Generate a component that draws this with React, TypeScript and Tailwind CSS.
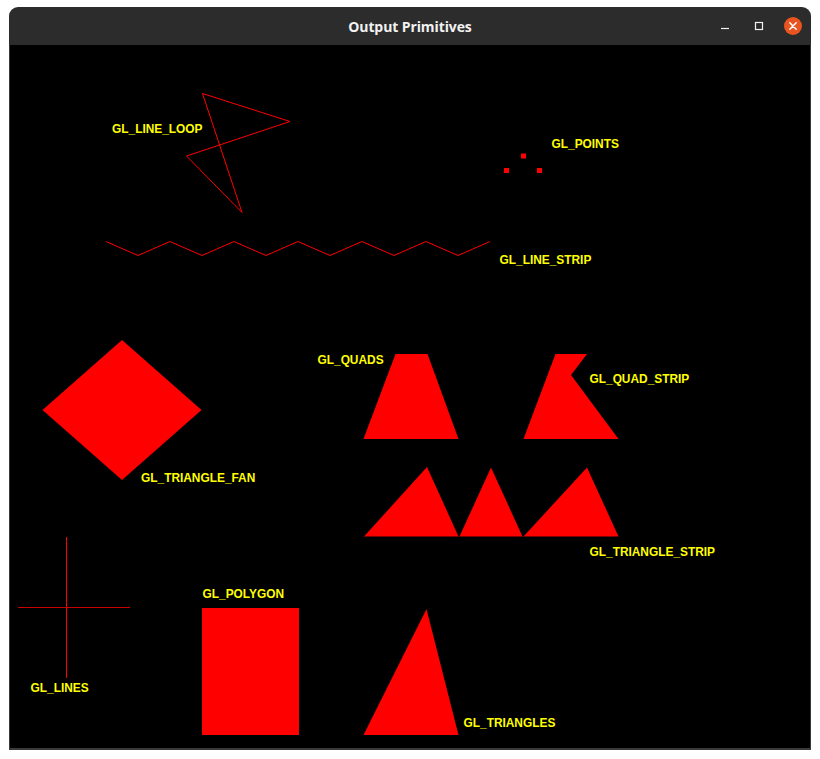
const RED = "#ff0000"
const YELLOW = "#ffff00"

type Label = { text: string; x: number; y: number }

// page coordinates, the svg viewBox lines up with the window position
const labels: Label[] = [
    { text: "GL_LINE_LOOP", x: 112, y: 133 },
    { text: "GL_POINTS", x: 551.5, y: 148 },
    { text: "GL_LINE_STRIP", x: 499.5, y: 264 },
    { text: "GL_QUADS", x: 317.5, y: 364 },
    { text: "GL_QUAD_STRIP", x: 589.5, y: 383 },
    { text: "GL_TRIANGLE_FAN", x: 141, y: 482 },
    { text: "GL_TRIANGLE_STRIP", x: 589.5, y: 556 },
    { text: "GL_POLYGON", x: 202.5, y: 598 },
    { text: "GL_LINES", x: 30.5, y: 692 },
    { text: "GL_TRIANGLES", x: 463.5, y: 727 },
]

const lineStrip = Array.from({ length: 13 }, (_, i) => `${106 + i * 32},${i % 2 === 0 ? 241.5 : 255.5}`).join(" ")

const Drawing = () => (
    <svg className="block" width={800} height={703} viewBox="10 45 800 703">
        {/* line loop */}
        <polygon points="202.5,93.5 290,121.5 186.5,156 242,212.5" fill="none" stroke={RED} strokeWidth={1} />

        {/* points */}
        <rect x={504} y={168} width={5} height={5} fill={RED} />
        <rect x={521} y={153.5} width={5} height={5} fill={RED} />
        <rect x={537} y={168} width={5} height={5} fill={RED} />

        {/* line strip */}
        <polyline points={lineStrip} fill="none" stroke={RED} strokeWidth={1} />

        {/* triangle fan */}
        <polygon points="122,340 201.5,410 122,480 42.5,410" fill={RED} />

        {/* quads */}
        <polygon points="395.5,354 427.5,354 458.5,439 363.5,439" fill={RED} />

        {/* quad strip */}
        <polygon points="555.5,354 587,354 571,375 618.5,439 523.5,439" fill={RED} />

        {/* triangle strip */}
        <polygon points="364,536.5 427,467 458.5,536.5" fill={RED} />
        <polygon points="459.5,536.5 491,467.5 522.5,536.5" fill={RED} />
        <polygon points="523.5,536.5 587,467.5 618.5,536.5" fill={RED} />

        {/* lines */}
        <line x1={66.5} y1={537} x2={66.5} y2={678} stroke={RED} strokeWidth={1} />
        <line x1={18} y1={607.5} x2={130} y2={607.5} stroke="#c80000" strokeWidth={1} />

        {/* polygon */}
        <rect x={202} y={608} width={97} height={127} fill={RED} />

        {/* triangles */}
        <polygon points="363.5,735 426.5,609 458.5,735" fill={RED} />

        {labels.map(l => (
            <text
                key={l.text}
                x={l.x}
                y={l.y}
                fill={YELLOW}
                fontFamily="'Liberation Sans', Arial, sans-serif"
                fontWeight={700}
                fontSize={11.9}
            >
                {l.text}
            </text>
        ))}
    </svg>
)

const TitleBar = () => (
    <div className="grid h-[38px] grid-cols-[1fr_auto_1fr] items-center rounded-t-[9px] bg-[#2c2c2c]">
        <div />
        <span className="font-['Open_Sans','Noto_Sans',sans-serif] text-[14px] font-bold tracking-[-0.1px] text-[#f2f2f2]">
            Output Primitives
        </span>
        <div className="flex items-center justify-end gap-4 pr-[9px]">
            <svg width={18} height={18} viewBox="0 0 18 18">
                <line x1={5} y1={11.5} x2={13} y2={11.5} stroke="#f2f2f2" strokeWidth={1.2} />
            </svg>
            <svg width={18} height={18} viewBox="0 0 18 18">
                <rect x={5.5} y={5.5} width={7} height={7} fill="none" stroke="#f2f2f2" strokeWidth={1.2} />
            </svg>
            <svg width={18} height={18} viewBox="0 0 18 18" className="-mt-[1px]">
                <circle cx={9} cy={9} r={9} fill="#e95420" />
                <path d="M5.8 5.8 L12.2 12.2 M12.2 5.8 L5.8 12.2" stroke="#ffffff" strokeWidth={1.5} strokeLinecap="round" />
            </svg>
        </div>
    </div>
)

export default function App() {
    return (
        <div className="min-h-screen bg-white pl-[9px] pt-[7px]">
            <div className="w-[802px]">
                <TitleBar />
                <div className="border-x border-b-2 border-[#3a3a3a] bg-black">
                    <Drawing />
                </div>
            </div>
        </div>
    )
}
